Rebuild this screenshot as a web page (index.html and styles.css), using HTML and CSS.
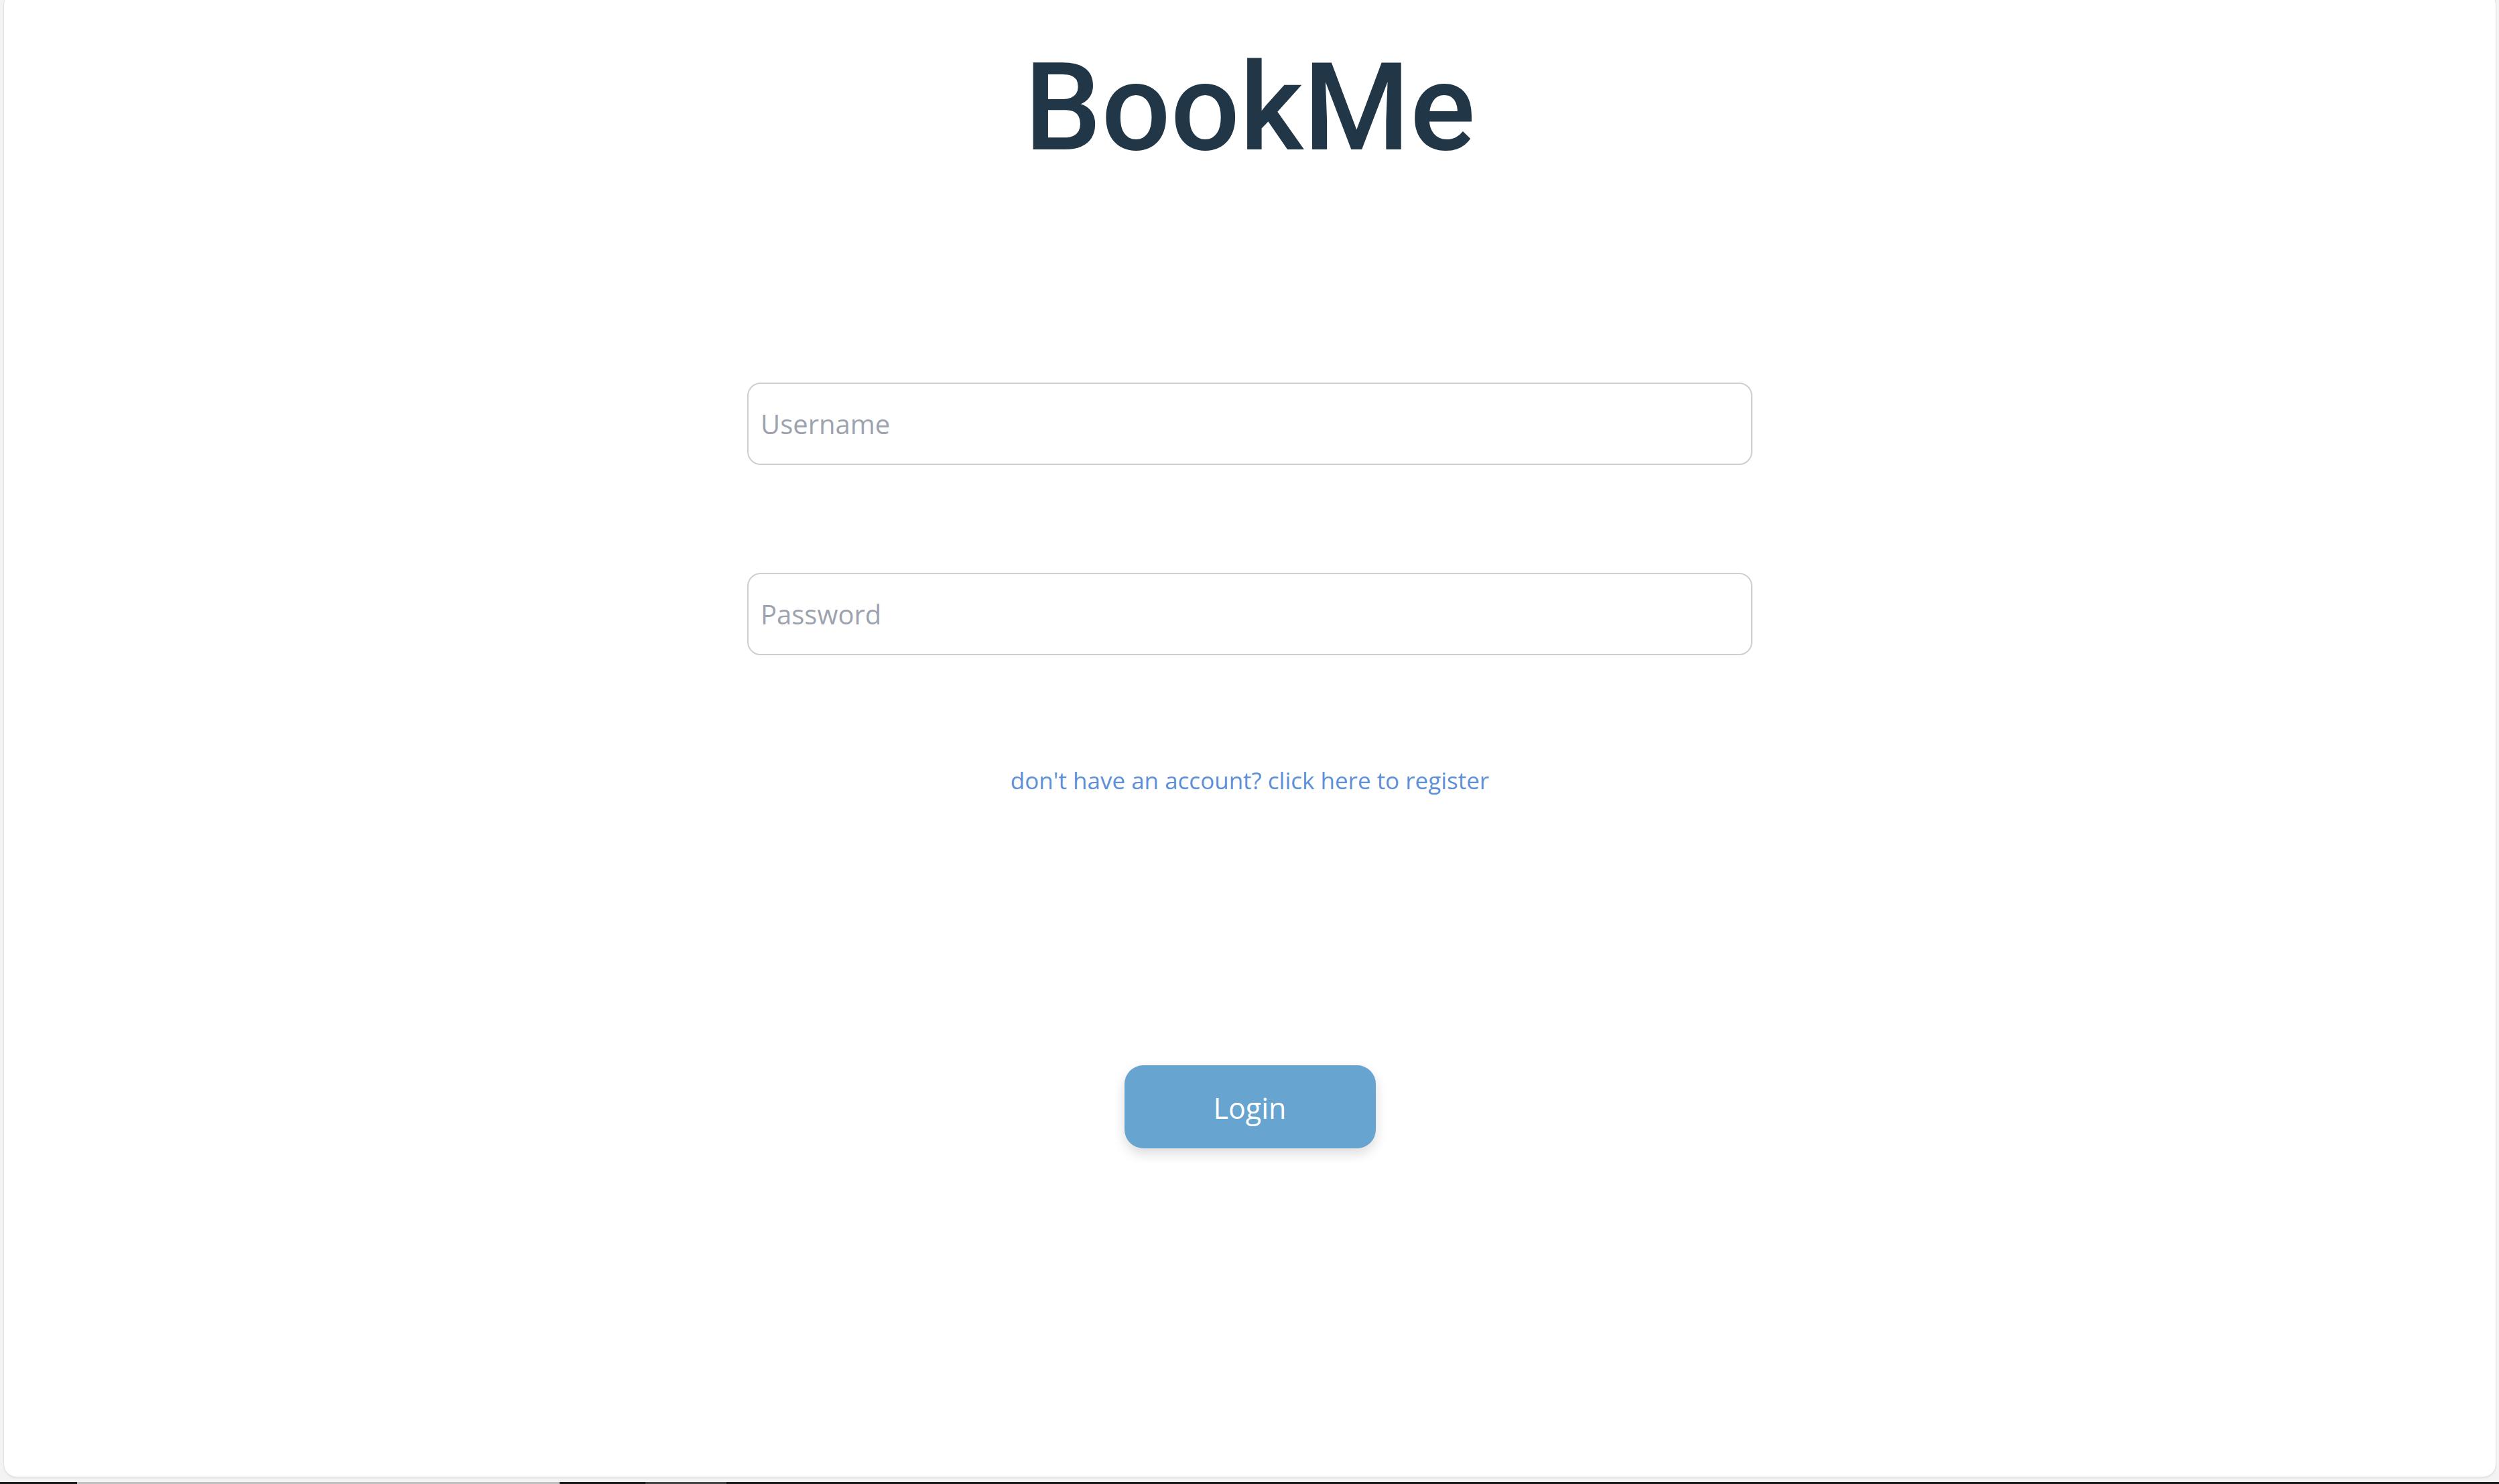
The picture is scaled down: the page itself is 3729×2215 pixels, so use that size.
FILE: index.html
```html
<!DOCTYPE html>
<html lang="en">
<head>
<meta charset="utf-8">
<title>BookMe</title>
<link rel="stylesheet" href="styles.css">
</head>
<body>
  <main class="panel">
    <h1 class="title">BookMe</h1>
    <form class="form">
      <input class="field" type="text" placeholder="Username">
      <input class="field field-gap" type="password" placeholder="Password">
      <a class="register" href="#">don't have an account? click here to register</a>
      <button class="login" type="button">Login</button>
    </form>
  </main>
  <div class="strip">
    <span class="seg seg-a"></span>
    <span class="seg seg-b"></span>
    <span class="seg seg-c"></span>
    <span class="seg seg-d"></span>
    <span class="seg seg-e"></span>
  </div>
</body>
</html>
```
FILE: styles.css
```css
html, body {
  margin: 0;
  padding: 0;
}
body {
  width: 3729px;
  height: 2215px;
  overflow: hidden;
  background: #f3f3f3;
  display: flex;
  flex-direction: column;
  font-family: "Open Sans", "Noto Sans", sans-serif;
}
.panel {
  box-sizing: border-box;
  margin: -12px 0 0 5px;
  width: 3720px;
  height: 2217px;
  background: #ffffff;
  border: 1px solid #e2e2e2;
  border-radius: 20px;
  box-shadow: 0 2px 2px rgba(0, 0, 0, 0.05);
  display: flex;
  flex-direction: column;
  align-items: center;
  padding-top: 81px;
}
.title {
  margin: 0;
  font-family: "Roboto", "Liberation Sans", sans-serif;
  font-weight: 500;
  font-size: 182px;
  line-height: 1;
  height: 182px;
  color: #213646;
}
.form {
  margin-top: 319px;
  width: 1500px;
  display: flex;
  flex-direction: column;
  align-items: center;
}
.field {
  box-sizing: border-box;
  width: 1500px;
  height: 123px;
  border: 2px solid #cfcfcf;
  border-radius: 20px;
  padding: 0 18px;
  font-family: "Open Sans", sans-serif;
  font-size: 40px;
  color: #333;
  background: #fff;
  outline: none;
}
.field::placeholder {
  color: #9ca3af;
}
.field-gap {
  margin-top: 161px;
}
.register {
  margin-top: 163px;
  font-size: 35px;
  line-height: 48px;
  color: #5d90d9;
  text-decoration: none;
}
.login {
  margin-top: 401px;
  width: 375px;
  height: 124px;
  border: none;
  border-radius: 28px;
  background: #67a4cf;
  color: #ffffff;
  font-family: "Open Sans", sans-serif;
  font-size: 43px;
  padding: 3px 0 0;
  box-shadow: 0 8px 18px rgba(0, 0, 0, 0.14);
  cursor: pointer;
}
.strip {
  margin-top: 7px;
  height: 3px;
  display: flex;
}
.seg {
  height: 3px;
}
.seg-a { width: 115px; background: #1b1b1b; }
.seg-b { width: 720px; background: #c0c0c0; }
.seg-c { width: 128px; background: #1b1b1b; }
.seg-d { width: 121px; background: #454545; }
.seg-e { flex: 1; background: #1b1b1b; }
```
